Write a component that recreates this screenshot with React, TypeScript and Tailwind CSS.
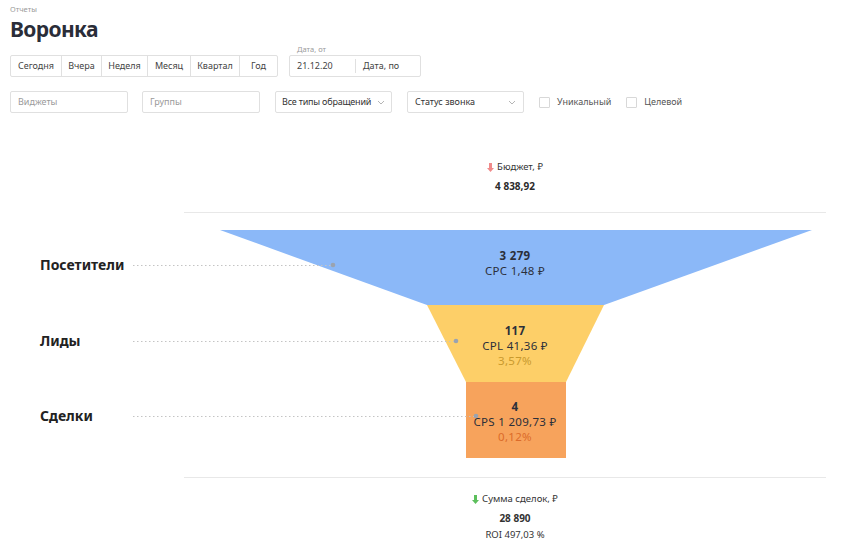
import React from "react";

const font = "font-['Noto_Sans',_'Open_Sans',_sans-serif]";

function Chevron() {
  return (
    <svg width="8" height="5" viewBox="0 0 8 5" className="text-[#b5b5b5] shrink-0">
      <path d="M1 1l3 3 3-3" fill="none" stroke="currentColor" strokeWidth="1" />
    </svg>
  );
}

export default function App() {
  const periods = [
    { t: "Сегодня", w: "w-[50px]" },
    { t: "Вчера", w: "w-[40px]" },
    { t: "Неделя", w: "w-[46px]" },
    { t: "Месяц", w: "w-[43px]" },
    { t: "Квартал", w: "w-[49px]" },
    { t: "Год", w: "w-[38px]" },
  ];
  return (
    <div className={`w-[843px] h-[558px] bg-white text-[#2b2b2b] ${font} overflow-hidden`}>
      <div className="pl-[10px] pt-[5px]">
        <div className="text-[7.5px] leading-[9px] text-[#9a9a9a]">Отчеты</div>
        <div className="text-[21px] leading-[22px] mt-[4px] font-bold text-[#2a2d38] tracking-[-0.6px]">Воронка</div>
      </div>
      <div className="flex items-end pl-[10px] mt-[4px] gap-[11px]">
        <div className="flex h-[22px] border border-[#e0e0e0] rounded-[2px]">
          {periods.map((p, i) => (
            <div
              key={p.t}
              className={`${p.w} flex items-center justify-center text-[9px] whitespace-nowrap text-[#444] ${i > 0 ? "border-l border-[#e0e0e0]" : ""}`}
            >
              {p.t}
            </div>
          ))}
        </div>
        <div className="flex flex-col">
          <div className="text-[7.5px] leading-[10px] text-[#9a9a9a] pl-[8px] mb-[1px]">Дата, от</div>
          <div className="flex h-[22px] w-[132px] border border-[#e0e0e0] rounded-[2px] text-[9px] text-[#444]">
            <div className="w-[66px] flex items-center pl-[7px] border-r border-[#e0e0e0] my-[3px]">21.12.20</div>
            <div className="flex items-center pl-[7px]">Дата, по</div>
          </div>
        </div>
      </div>
      <div className="flex items-center pl-[10px] mt-[14px] h-[22px] text-[9px] whitespace-nowrap">
        <div className="w-[118px] h-[22px] border border-[#e0e0e0] rounded-[2px] flex items-center pl-[7px] text-[#9a9a9a]">Виджеты</div>
        <div className="w-[118px] h-[22px] border border-[#e0e0e0] rounded-[2px] flex items-center pl-[7px] text-[#9a9a9a] ml-[14px]">Группы</div>
        <div className="w-[117px] h-[22px] border border-[#e0e0e0] rounded-[2px] flex items-center justify-between px-[6px] text-[#333] ml-[15px]">
          <span className="tracking-[-0.2px]">Все типы обращений</span>
          <Chevron />
        </div>
        <div className="w-[117px] h-[22px] border border-[#e0e0e0] rounded-[2px] flex items-center justify-between px-[7px] text-[#333] ml-[15px]">
          <span>Статус звонка</span>
          <Chevron />
        </div>
        <div className="flex items-center ml-[15px] text-[#555]">
          <div className="w-[11px] h-[11px] border border-[#d8d8d8] rounded-[1px]" />
          <span className="ml-[7px]">Уникальный</span>
        </div>
        <div className="flex items-center ml-[15px] text-[#555]">
          <div className="w-[11px] h-[11px] border border-[#d8d8d8] rounded-[1px]" />
          <span className="ml-[7px]">Целевой</span>
        </div>
      </div>

      <div className="relative w-[843px] h-[445px]">
        {/* chart canvas; top of this box is page y=113 */}
        <svg className="absolute left-0 top-0" width="843" height="445" viewBox="0 113 843 445">
          <line x1="184" y1="212.5" x2="826" y2="212.5" stroke="#e8e8e8" strokeWidth="1" />
          <line x1="184" y1="477.5" x2="826" y2="477.5" stroke="#e8e8e8" strokeWidth="1" />
          <polygon points="220,230 812,230 604,305 427,305" fill="#8bb8f8" />
          <polygon points="427,305 604,305 566,382 466,382" fill="#fdcf68" />
          <rect x="466" y="382" width="100" height="76" fill="#f7a35c" />
          <line x1="133" y1="265.5" x2="333" y2="265.5" stroke="#c4c4c4" strokeWidth="1" strokeDasharray="1.5 2.5" />
          <line x1="133" y1="341.5" x2="456" y2="341.5" stroke="#c4c4c4" strokeWidth="1" strokeDasharray="1.5 2.5" />
          <line x1="133" y1="416.5" x2="476" y2="416.5" stroke="#c4c4c4" strokeWidth="1" strokeDasharray="1.5 2.5" />
          <circle cx="333" cy="265" r="2.3" fill="#9aa3b0" />
          <circle cx="456" cy="341" r="2.3" fill="#9aa3b0" />
          <circle cx="476" cy="416" r="2.3" fill="#9aa3b0" />
        </svg>

        <div className="absolute left-[415px] w-[200px] top-[48px] flex flex-col items-center">
          <div className="flex items-center text-[9.5px] leading-[12px] text-[#333]">
            <svg width="7" height="9" viewBox="0 0 7 9" className="mr-[3px]">
              <path d="M2 0h3v5h2L3.5 9 0 5h2z" fill="#f08a8a" />
            </svg>
            Бюджет, ₽
          </div>
          <div className="text-[10px] leading-[12px] font-bold mt-[7px]">4 838,92</div>
        </div>

        <div className="absolute left-[40px] top-[144px] text-[14px] leading-[16px] font-bold text-[#222]">Посетители</div>
        <div className="absolute left-[40px] top-[220px] text-[14px] leading-[16px] font-bold text-[#222]">Лиды</div>
        <div className="absolute left-[40px] top-[295px] text-[14px] leading-[16px] font-bold text-[#222]">Сделки</div>

        <div className="absolute left-[415px] w-[200px] top-[135px] flex flex-col items-center text-[11.5px] leading-[15px] tracking-[0.3px] text-[#2b2f3a]">
          <div className="font-bold">3 279</div>
          <div>CPC 1,48 ₽</div>
        </div>
        <div className="absolute left-[415px] w-[200px] top-[210px] flex flex-col items-center text-[11.5px] leading-[15px] tracking-[0.3px] text-[#2b2f3a]">
          <div className="font-bold">117</div>
          <div>CPL 41,36 ₽</div>
          <div className="text-[#c99a2e]">3,57%</div>
        </div>
        <div className="absolute left-[415px] w-[200px] top-[286px] flex flex-col items-center text-[11.5px] leading-[15px] tracking-[0.3px] text-[#2b2f3a]">
          <div className="font-bold">4</div>
          <div>CPS 1 209,73 ₽</div>
          <div className="text-[#dc6b2a]">0,12%</div>
        </div>

        <div className="absolute left-[415px] w-[200px] top-[380px] flex flex-col items-center text-[#333]">
          <div className="flex items-center text-[9.5px] leading-[12px]">
            <svg width="7" height="9" viewBox="0 0 7 9" className="mr-[3px]">
              <path d="M2 0h3v5h2L3.5 9 0 5h2z" fill="#5cbf5c" />
            </svg>
            Сумма сделок, ₽
          </div>
          <div className="text-[10px] leading-[12px] font-bold mt-[7px]">28 890</div>
          <div className="text-[9.5px] leading-[12px] mt-[5px]">ROI 497,03 %</div>
        </div>
      </div>
    </div>
  );
}
